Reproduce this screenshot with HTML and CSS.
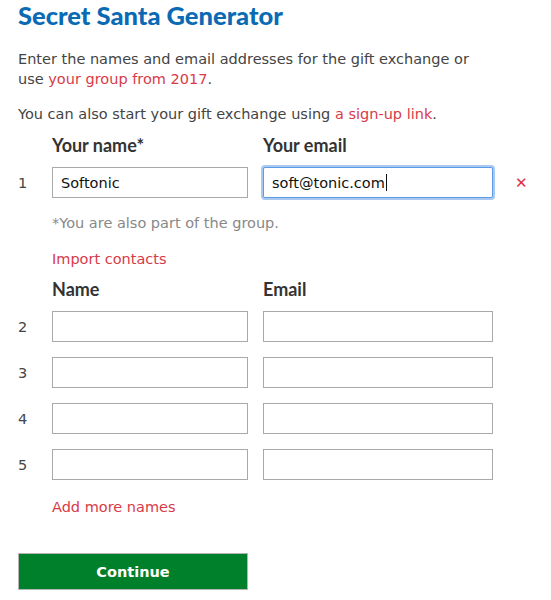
FILE: index.html
```html
<!DOCTYPE html>
<html lang="en">
<head>
<meta charset="utf-8">
<title>Secret Santa Generator</title>
<link rel="stylesheet" href="styles.css">
</head>
<body>
<main class="page">
  <h1 class="title">Secret Santa Generator</h1>
  <p class="intro">Enter the names and email addresses for the gift exchange or use <a class="link" href="#">your group from 2017</a>.</p>
  <p class="intro second">You can also start your gift exchange using <a class="link" href="#">a sign-up link</a>.</p>

  <div class="row head">
    <span></span>
    <span class="label">Your name*</span>
    <span class="label">Your email</span>
  </div>
  <div class="row">
    <span class="num">1</span>
    <div class="field">Softonic</div>
    <div class="field focus">soft@tonic.com<span class="caret"></span></div>
    <span class="remove">&#x2715;</span>
  </div>
  <p class="note">*You are also part of the group.</p>
  <a class="link import" href="#">Import contacts</a>

  <div class="row head second-head">
    <span></span>
    <span class="label">Name</span>
    <span class="label">Email</span>
  </div>
  <div class="row list"><span class="num">2</span><div class="field"></div><div class="field"></div></div>
  <div class="row list"><span class="num">3</span><div class="field"></div><div class="field"></div></div>
  <div class="row list"><span class="num">4</span><div class="field"></div><div class="field"></div></div>
  <div class="row list"><span class="num">5</span><div class="field"></div><div class="field"></div></div>

  <a class="link more" href="#">Add more names</a>

  <button class="continue" type="button">Continue</button>
</main>
</body>
</html>
```
FILE: styles.css
```css
html, body {
  margin: 0;
  padding: 0;
  background: #fff;
}
body {
  font-family: "DejaVu Sans", Verdana, sans-serif;
  font-size: 14.5px;
  color: #444;
}
.page {
  padding: 0 18px;
}
.title {
  margin: 0;
  padding-top: 0;
  font-family: Lato, "Open Sans", sans-serif;
  font-weight: 900;
  font-size: 25.5px;
  line-height: 30px;
  color: #0a6ab4;
}
.intro {
  margin: 19px 0 0;
  line-height: 20px;
  max-width: 470px;
}
.intro.second {
  margin-top: 15px;
}
.link {
  color: #d83a48;
  text-decoration: none;
}
.row {
  display: grid;
  grid-template-columns: 19px 196px 230px auto;
  column-gap: 15px;
  align-items: center;
}
.head {
  margin-top: 10px;
  height: 22px;
}
.label {
  font-family: Lato, "Open Sans", sans-serif;
  font-weight: 700;
  font-size: 18px;
  color: #333;
}
.head + .row {
  margin-top: 11px;
}
.num {
  color: #444;
}
.field {
  box-sizing: border-box;
  height: 31px;
  border: 1px solid #a9a9a9;
  background: #fff;
  padding: 0 8px;
  display: flex;
  align-items: center;
  color: #111;
}
.field.focus {
  border: 1px solid #5b9be6;
  box-shadow: 0 0 0 2px #a9c9f1;
  border-radius: 2px;
}
.caret {
  display: inline-block;
  width: 1px;
  height: 17px;
  background: #111;
  margin-left: 1px;
}
.remove {
  padding-left: 7px;
  color: #e0303f;
  font-size: 15px;
}
.note {
  margin: 15px 0 0 34px;
  color: #888;
  line-height: 20px;
}
.import {
  display: block;
  margin: 16px 0 0 34px;
  line-height: 20px;
}
.second-head {
  margin-top: 9px;
}
.list + .list {
  margin-top: 15px;
}
.more {
  display: block;
  margin: 17px 0 0 34px;
  line-height: 20px;
}
.continue {
  display: block;
  margin-top: 36px;
  width: 230px;
  height: 37px;
  background: #00802a;
  border: 1px solid #b5b5b5;
  color: #fff;
  font-family: "DejaVu Sans", Verdana, sans-serif;
  font-weight: 700;
  font-size: 14.5px;
  cursor: pointer;
}
```
